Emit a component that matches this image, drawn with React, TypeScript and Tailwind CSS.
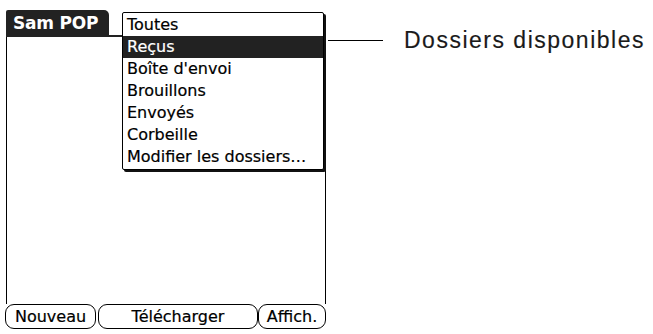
export default function App() {
  const items = ["Toutes", "Reçus", "Boîte d'envoi", "Brouillons", "Envoyés", "Corbeille", "Modifier les dossiers…"];
  return (
    <div className="w-[653px] h-[334px] bg-white flex items-start font-['DejaVu_Sans',sans-serif] text-black">
      <div className="relative ml-[5px] mt-[10px] w-[321px] h-[319px] flex flex-col">
        <div className="flex h-[27px]">
          <div className="ml-[1px] w-[103px] bg-[#222] text-white font-bold text-[17px] leading-[26px] pl-[7px] rounded-tr-[5px] rounded-tl-[2px] tracking-[-0.2px]">
            Sam POP
          </div>
          <div className="flex-1 flex flex-col justify-end">
            <div className="h-[2px] bg-[#222]" />
          </div>
        </div>
        <div className="flex-1 ml-[1px] border-l border-r border-black" />
        <div className="flex h-[25px] text-[16px] leading-[22px] [-webkit-text-stroke:0.2px_black]">
          <div className="w-[91px] border-[1.5px] border-black rounded-[9px] flex items-center justify-center">Nouveau</div>
          <div className="ml-[2px] w-[160px] border-[1.5px] border-black rounded-[9px] flex items-center justify-center">Télécharger</div>
          <div className="w-[68px] border-[1.5px] border-black rounded-[9px] flex items-center justify-center">Affich.</div>
        </div>
        <div className="absolute left-[117px] top-[2px] w-[202px] bg-white border border-black rounded-[2px] shadow-[2px_2px_0_0_#111] pt-[1px] pb-[1px]">
          {items.map((it, i) => (
            <div
              key={it}
              className={
                i === 1
                  ? "h-[22px] leading-[22px] text-[16px] pl-[4px] whitespace-nowrap bg-[#222] text-white [-webkit-text-stroke:0.2px_white]"
                  : "h-[22px] leading-[22px] text-[16px] pl-[4px] whitespace-nowrap [-webkit-text-stroke:0.2px_black]"
              }
            >
              {it}
            </div>
          ))}
        </div>
      </div>
      <div className="mt-[27px] h-[26px] flex items-center">
        <div className="ml-[2px] w-[55px] h-px bg-black" />
        <div className="ml-[21px] text-[23px] leading-[26px] tracking-[1.5px] font-['Liberation_Sans',sans-serif] text-[#1a1a1a] [-webkit-text-stroke:0.15px_#1a1a1a]">
          Dossiers disponibles
        </div>
      </div>
    </div>
  );
}
